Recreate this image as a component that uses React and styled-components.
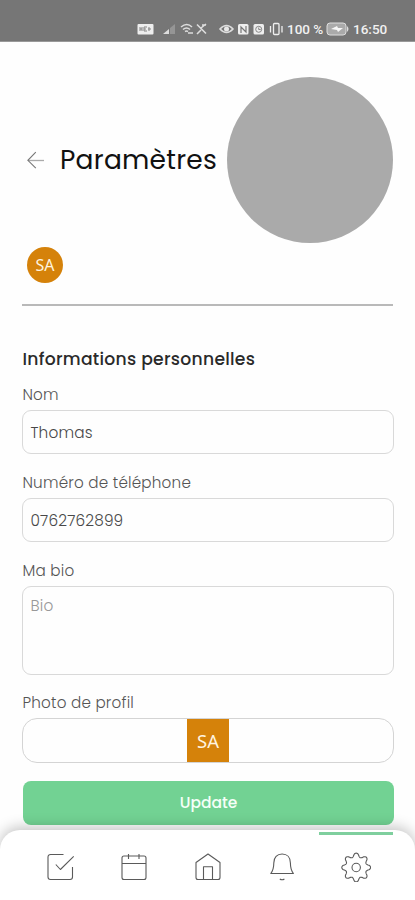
import React from 'react'
import styled, { createGlobalStyle } from 'styled-components'

function App() {
  return (
    <>
      <GlobalStyle />
      <Screen>
        <StatusBar>
          <StatusIcons />
          <Percent>100 %</Percent>
          <Battery />
          <Clock>16:50</Clock>
        </StatusBar>

        <Content>
          <Header>
            <BackButton aria-label="Retour">
              <svg width="18" height="18" viewBox="0 0 18 18" fill="none" stroke="#777">
                <path d="M.8 9.5H17" stroke="#aaa" strokeWidth="1.3" />
                <path d="M8.8 1.2.9 9.3l7.9 7.9" strokeWidth="1.1" />
              </svg>
            </BackButton>
            <Title>Paramètres</Title>
            <Picture />
          </Header>
          <Avatar>SA</Avatar>
          <Divider />

          <SectionTitle>Informations personnelles</SectionTitle>
          <Label $height="38px">Nom</Label>
          <Field $height="44px"><Value>Thomas</Value></Field>
          <Label $height="44px">Numéro de téléphone</Label>
          <Field $height="44px"><Value>0762762899</Value></Field>
          <Label $height="44px">Ma bio</Label>
          <Field $height="89px" $top="7px"><Value $muted>Bio</Value></Field>
          <Label $height="43px">Photo de profil</Label>
          <PhotoField><Photo>SA</Photo></PhotoField>
          <UpdateButton>Update</UpdateButton>
        </Content>

        <Nav>
          <NavItem>
            <NavIcon viewBox="0 0 30 30">
              <path d="M18.5 2.5H5.5A2.5 2.5 0 0 0 3 5v20a2.5 2.5 0 0 0 2.5 2.5H25a2.5 2.5 0 0 0 2.5-2.5V15" />
              <path d="m10.8 12.5 4.6 5L28.7 4.4" />
            </NavIcon>
          </NavItem>
          <NavItem>
            <NavIcon viewBox="0 0 30 30">
              <rect x="3" y="4" width="24" height="23.5" rx="2" />
              <path d="M3 11.5h24M9.5 2v5M20 2v5" />
            </NavIcon>
          </NavItem>
          <NavItem>
            <NavIcon viewBox="0 0 30 30">
              <path d="M3 10.5 15 2l12 8.5v15a2 2 0 0 1-2 2H5a2 2 0 0 1-2-2z" />
              <path d="M10.5 27.5V14.8h9v12.7" />
            </NavIcon>
          </NavItem>
          <NavItem>
            <NavIcon viewBox="0 0 30 30">
              <path d="M3.8 21.5h22.6c-2-2.6-3-5.5-3-10.5 0-5.7-3.3-9-8.3-9s-8.3 3.3-8.3 9c0 5-1 7.9-3 10.5z" />
              <path d="M12.8 27c1.2.8 3.4.8 4.6 0" />
            </NavIcon>
          </NavItem>
          <NavItem $active>
            <NavIcon viewBox="0 0 30 30">
              <circle cx="15.2" cy="15.5" r="4.2" />
              <path d={gearPath()} />
            </NavIcon>
          </NavItem>
        </Nav>
      </Screen>
    </>
  )
}

export default App

// Eight rounded teeth, with a shallow notch between each pair
function gearPath() {
  const points = []
  for (let i = 0; i < 144; i++) {
    const angle = (i / 144) * Math.PI * 2
    const wave = Math.cos(angle * 8)
    const radius = 12.5 + 1.9 * Math.sign(wave) * Math.pow(Math.abs(wave), 0.75)
    const x = 15.2 + radius * Math.cos(angle)
    const y = 15.5 + radius * Math.sin(angle)
    points.push(`${x.toFixed(2)} ${y.toFixed(2)}`)
  }
  return `M${points.join('L')}Z`
}

function StatusIcons() {
  return (
    <StatusSvg width="148" height="14" viewBox="0 0 148 14">
      <rect x="1.5" y="2" width="16" height="10.5" rx="1" fill="#eee" />
      <path d="M4 5v4M6 5v4M4 7h2M8 5v4h3M8 5h3M8 7h2M13 5v4M12 7h3" stroke="#858585" fill="none" />
      <path d="m27 12 6-5v5z" fill="#ddd" />
      <path d="m34 6 5-4v10h-5z" fill="#959595" />
      <g fill="none" stroke="#ddd" strokeWidth="1.6">
        <path d="M45 5q6-5 11 0M47 7.5q3.5-3 7 0M49 9.5q1.5-1 3 0M52 11h5" />
        <path d="m61 2.5 9 9M61 12l4-4M65 6l5-4M66 3h4" />
        <path d="M84 7q6.5-7 13 0-6.5 7-13 0z" />
      </g>
      <circle cx="90.5" cy="7" r="2.5" fill="#e8e8e8" />
      <rect x="102" y="2" width="10.5" height="10.5" rx="1.5" fill="#eee" />
      <path d="M105 11V5l5 5V4" stroke="#777" fill="none" strokeWidth="1.2" />
      <rect x="117.5" y="2" width="10.5" height="10.5" rx="1.5" fill="#eee" />
      <circle cx="122.7" cy="7.3" r="3" stroke="#888" fill="none" />
      <path d="M122.7 5.5v2h2" stroke="#888" fill="none" />
      <g fill="none" stroke="#eee" strokeWidth="1.3">
        <rect x="137.5" y="1.5" width="5.5" height="11" rx="1" />
        <path d="M134.5 4v6.5M146 4v6.5" />
      </g>
    </StatusSvg>
  )
}

function Battery() {
  return (
    <BatterySvg width="24" height="14" viewBox="0 0 24 14">
      <rect x="1" y="1" width="19" height="12" rx="3" fill="#aaa" stroke="#ddd" />
      <path d="M21 4q3 3 0 6z" fill="#ddd" />
      <path d="m5 7 6-3 1 2h5l-5 4-1-2z" fill="#f6f6f6" />
    </BatterySvg>
  )
}

const GlobalStyle = createGlobalStyle`
* {
    box-sizing: border-box;
}
body {
    margin: 0;
    background: #fefefe;
    font-family: Poppins, Inter, "Open Sans", sans-serif;
}
`

const Screen = styled.div`
width: 415px;
height: 900px;
display: flex;
flex-direction: column;
overflow: hidden;
background: #fefefe;
`

const StatusBar = styled.div`
height: 42px;
flex-shrink: 0;
display: flex;
align-items: center;
padding: 16px 0 0 136px;
background: #767676;
border-bottom: 1px solid #999;
color: #f1f1f1;
font-family: Roboto, sans-serif;
font-size: 13.5px;
font-weight: 500;
white-space: nowrap;
`

const StatusSvg = styled.svg`
flex-shrink: 0;
`

const Percent = styled.span`
width: 37px;
margin-left: 3px;
`

const BatterySvg = styled.svg`
flex-shrink: 0;
margin-left: 2px;
`

const Clock = styled.span`
margin-left: 3px;
`

const Content = styled.main`
flex: 1;
min-height: 0;
display: flex;
flex-direction: column;
padding: 35px 21px 0 22px;
`

const Header = styled.header`
height: 166px;
flex-shrink: 0;
display: flex;
align-items: center;
`

const BackButton = styled.button`
width: 38px;
height: 30px;
padding: 0 0 0 5px;
border: 0;
background: none;
display: flex;
align-items: center;
`

const Title = styled.h1`
width: 167px;
margin: 0;
font-size: 26.5px;
line-height: 40px;
font-weight: 400;
letter-spacing: 0.25px;
color: #111;
white-space: nowrap;
`

const Picture = styled.div`
width: 166px;
height: 166px;
flex-shrink: 0;
border-radius: 50%;
background: #aaa;
`

const Avatar = styled.div`
width: 36px;
height: 36px;
flex-shrink: 0;
margin: 4px 0 0 5px;
border-radius: 50%;
background: #d5820a;
color: #fff3df;
font: 16px/36px "Noto Sans", sans-serif;
text-align: center;
`

const Divider = styled.hr`
width: 371px;
height: 2px;
flex-shrink: 0;
margin: 21px 0 0;
border: 0;
background: #b9b9b9;
`

const SectionTitle = styled.h2`
margin: 40px 0 0;
padding-left: 0.5px;
font-size: 17.2px;
line-height: 26px;
font-weight: 500;
letter-spacing: 0.27px;
color: #2a2a2a;
white-space: nowrap;
flex-shrink: 0;
`

const Label = styled.label`
height: ${(props) => props.$height};
flex-shrink: 0;
display: flex;
align-items: flex-end;
padding: 0 0 4px 0.5px;
font-size: 15.2px;
line-height: 22px;
font-weight: 300;
letter-spacing: 0.2px;
color: #555;
white-space: nowrap;
`

const Field = styled.div`
height: ${(props) => props.$height};
flex-shrink: 0;
padding: ${(props) => props.$top || '10px'} 7.5px;
border: 1px solid #d9d9d9;
border-radius: 9px;
`

const Value = styled.span`
display: block;
font-size: 15.3px;
line-height: 23px;
font-weight: 300;
letter-spacing: 0.17px;
color: ${(props) => (props.$muted ? '#999' : '#484848')};
`

const PhotoField = styled.div`
height: 45px;
flex-shrink: 0;
display: flex;
align-items: center;
justify-content: center;
border: 1px solid #d4d4d4;
border-radius: 15px;
`

const Photo = styled.div`
width: 42px;
height: 43px;
background: #d5820a;
color: #fff3df;
font: 18.5px/43px "Noto Sans", sans-serif;
text-align: center;
`

const UpdateButton = styled.button`
height: 44px;
flex-shrink: 0;
margin: 18px 0 0 1px;
padding: 0 0 1px;
border: 0;
border-radius: 8px;
background: #72d293;
color: #f5fff8;
font: 500 15.5px Poppins, Inter, sans-serif;
`

const Nav = styled.nav`
height: 70px;
flex-shrink: 0;
display: flex;
padding: 2px 22px 0 23px;
border-radius: 20px 20px 0 0;
background: #fff;
box-shadow: 0 -3px 14px rgba(0, 0, 0, 0.23);
`

const NavItem = styled.div`
flex: 1;
display: flex;
justify-content: center;
padding-top: 17px;
border-top: 3px solid ${(props) => (props.$active ? '#7fcf9e' : 'transparent')};
`

const NavIcon = styled.svg`
width: 30px;
height: 30px;
fill: none;
stroke: #5a5a5a;
stroke-width: 1.1;
stroke-linejoin: round;
`
